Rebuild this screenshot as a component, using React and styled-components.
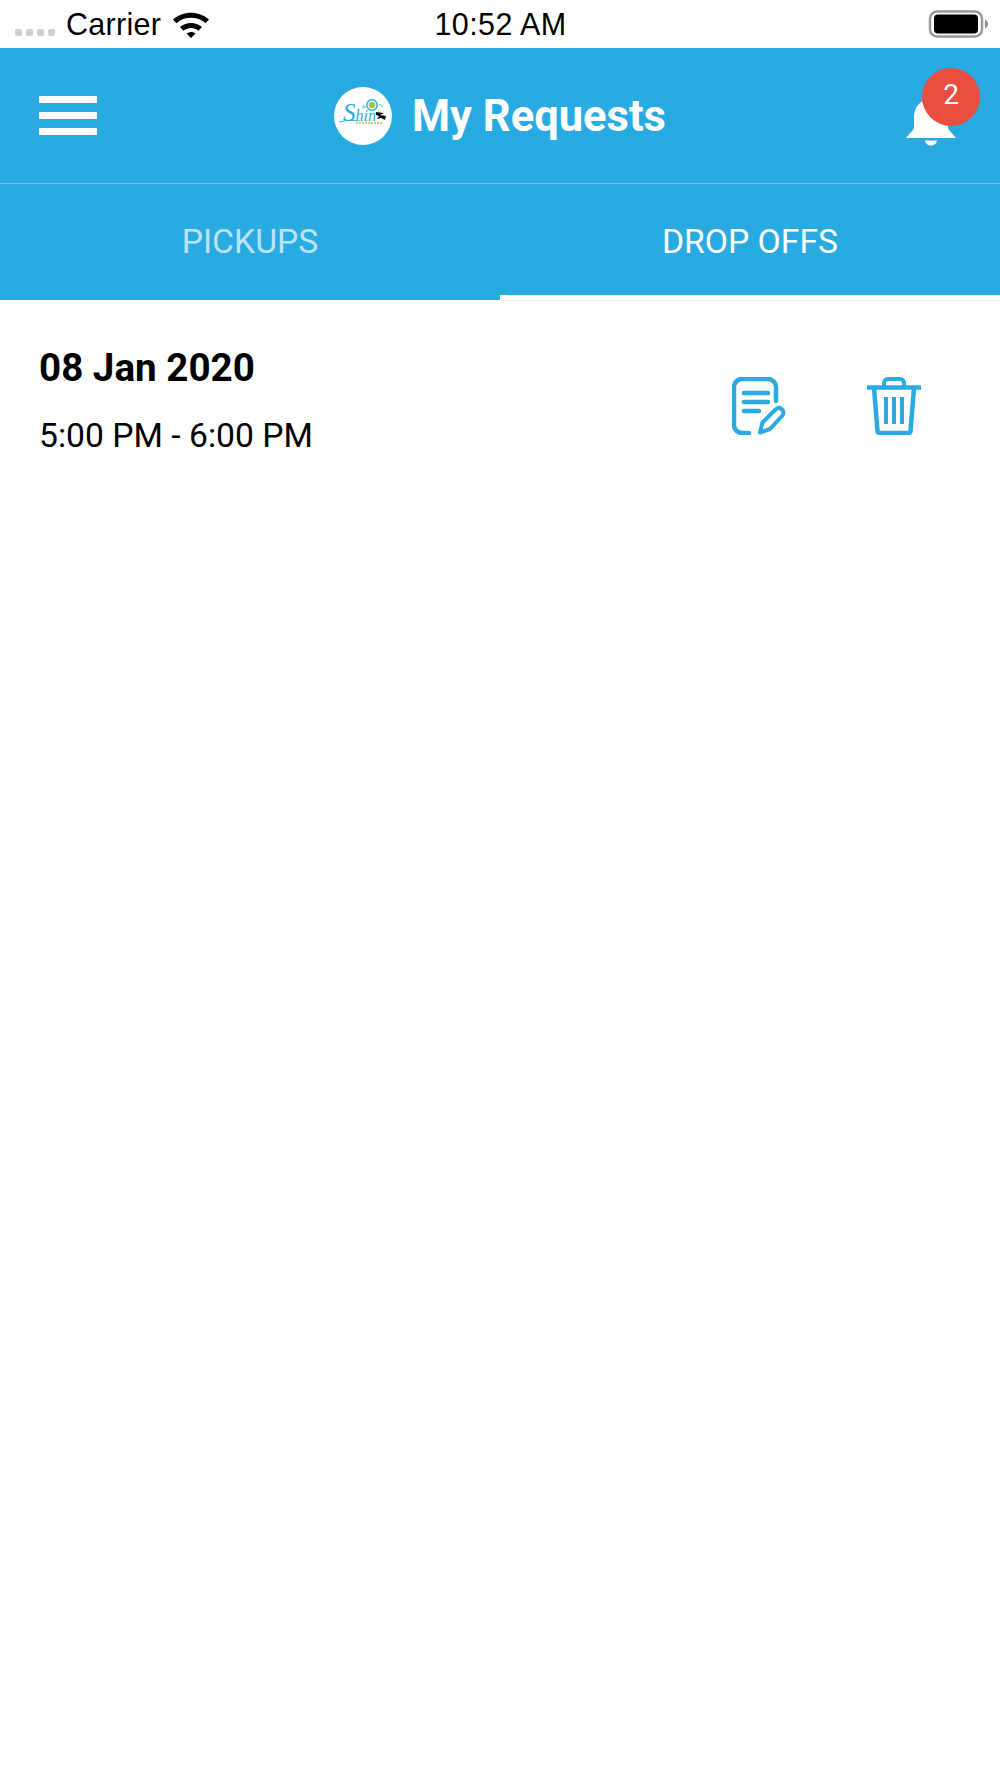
import React from 'react';
import styled, { createGlobalStyle } from 'styled-components';

const brand = '#29abe2';

const GlobalStyle = createGlobalStyle`
  html, body { margin: 0; padding: 0; background: #fff; }
  body { font-family: Roboto, "Liberation Sans", sans-serif; }
`;

const Page = styled.div`
  width: 1000px;
  height: 1778px;
  background: #fff;
  overflow: hidden;
`;

const StatusBar = styled.div`
  height: 48px;
  display: grid;
  grid-template-columns: 1fr auto 1fr;
  align-items: center;
  padding: 0 12px 0 15px;
  box-sizing: border-box;
  font-family: "Liberation Sans", sans-serif;
  font-size: 30.5px;
  color: #000;
`;

const StatusLeft = styled.div`
  display: flex;
  align-items: center;
`;

const Signal = styled.div`
  display: flex;
  gap: 4px;
  margin: 17px 11px 0 0;
`;

const SignalDot = styled.span`
  width: 7px;
  height: 7px;
  border-radius: 2px;
  background: #cfcfcf;
`;

const Carrier = styled.span`
  margin-right: 11px;
  letter-spacing: 0.3px;
`;

const Clock = styled.span`
  letter-spacing: 0.4px;
  margin-left: -2px;
`;

const StatusRight = styled.div`
  display: flex;
  justify-content: flex-end;
`;

const Header = styled.header`
  height: 135px;
  background: ${brand};
  border-bottom: 1px solid #6fbfe0;
  display: grid;
  grid-template-columns: 1fr auto 1fr;
  align-items: center;
  padding: 0 39px;
`;

const MenuButton = styled.div`
  width: 58px;
  display: flex;
  flex-direction: column;
  gap: 9px;
`;

const MenuBar = styled.span`
  height: 7px;
  background: #fff;
`;

const TitleGroup = styled.div`
  display: flex;
  align-items: center;
  gap: 20px;
`;

const LogoDisc = styled.div`
  width: 58px;
  height: 58px;
  border-radius: 50%;
  background: #fff;
  overflow: hidden;
`;

const Title = styled.h1`
  margin: 2px 0 0;
  font-size: 43.5px;
  line-height: 56px;
  font-weight: 700;
  color: #fff;
  white-space: nowrap;
`;

const BellArea = styled.div`
  justify-self: end;
  position: relative;
  width: 58px;
  height: 95px;
  margin-right: -19px;
`;

const BellIcon = styled.svg`
  position: absolute;
  left: -18px;
  top: 28px;
`;

const Badge = styled.span`
  position: absolute;
  left: 0;
  top: 0;
  width: 58px;
  height: 58px;
  border-radius: 50%;
  background: #e94e3e;
  color: #fff;
  font-size: 28px;
  line-height: 53px;
  text-align: center;
`;

const Tabs = styled.nav`
  height: 116px;
  background: ${brand};
  display: grid;
  grid-template-columns: 1fr 1fr;
`;

const Tab = styled.div`
  display: flex;
  align-items: center;
  justify-content: center;
  padding-top: 4px;
  box-sizing: border-box;
  font-size: 33.7px;
  color: ${(p) => (p.$active ? '#fff' : 'rgba(255, 255, 255, 0.7)')};
  border-bottom: 5px solid ${(p) => (p.$active ? '#fff' : 'transparent')};
  box-shadow: ${(p) => (p.$active ? '0 1px 0 #f0f0f0' : 'none')};
`;

const RequestRow = styled.section`
  display: flex;
  justify-content: space-between;
  align-items: flex-start;
  padding: 45px 79px 0 39px;
`;

const RequestDate = styled.div`
  font-size: 38.6px;
  line-height: 46px;
  font-weight: 700;
  color: #000;
`;

const RequestTime = styled.div`
  font-size: 33.7px;
  line-height: 40px;
  margin-top: 25px;
  color: #000;
`;

const Actions = styled.div`
  display: flex;
  gap: 79px;
  margin-top: 32px;
`;

const SignalIcon = () => (
  <svg width="38" height="28" viewBox="0 0 38 28">
    <path d="M1 9.5C11 .5 27 .5 37 9.5l-3.4 3.8C25.5 6 12.5 6 4.400 13.300z" fill="#000" />
    <path d="M8 17c6.5-5.500 15.500-5.500 22 0l-3.500 3.800c-4.500-3.600-10.500-3.600-15 0z" fill="#000" />
    <path d="M14.500 23.500c2.800-2 6.200-2 9 0L19 28z" fill="#000" />
  </svg>
);

const BatteryIcon = () => (
  <svg width="60" height="28" viewBox="0 0 60 28">
    <rect x="2" y="1.5" width="52" height="25" rx="7" fill="none" stroke="#999" strokeWidth="2.5" />
    <rect x="6" y="4.5" width="44" height="19" rx="4" fill="#000" />
    <path d="M57 9.5c2 .5 3 2.500 3 4.500s-1 4-3 4.500z" fill="#8e8e8e" />
  </svg>
);

const ShineLogo = () => (
  <svg width="58" height="58" viewBox="0 0 58 58">
    <circle cx="38" cy="18" r="5.2" fill="none" stroke="#29abe2" strokeWidth="1.4" />
    <circle cx="38" cy="18" r="3.2" fill="#9ccb3b" />
    <circle cx="30" cy="20" r="1.2" fill="none" stroke="#29abe2" strokeWidth="0.7" />
    <path d="M45 18c2-1 3 0 3 2" fill="none" stroke="#29abe2" strokeWidth="0.8" />
    <text x="9" y="34" fontFamily="Liberation Serif, serif" fontStyle="italic" fill="#29abe2">
      <tspan fontSize="25">S</tspan>
      <tspan fontSize="16">hin</tspan>
    </text>
    <path d="M5 35c8-2 14-2 21-1" fill="none" stroke="#29abe2" strokeWidth="0.9" />
    <path d="M42 25l8 1-4 2 6 1-1 4-4-2-4 1 2-3-3-1z" fill="#111" />
    <path d="M22 36h27" stroke="#9ccb3b" strokeWidth="1.5" strokeDasharray="2 1" />
  </svg>
);

const Bell = () => (
  <BellIcon width="54" height="52" viewBox="0 0 54 52">
    <path d="M27 3C16 3 10 12 10 21v10c0 3-4 6-8 11h50c-4-5-8-8-8-11V21C44 12 38 3 27 3z" fill="#fff" />
    <path d="M21 44.5h12c-.5 3-3 5-6 5s-5.500-2-6-5z" fill="#fff" />
  </BellIcon>
);

const EditNoteIcon = () => (
  <svg width="56" height="58" viewBox="0 0 56 58" fill="none" stroke={brand} strokeLinecap="round" strokeLinejoin="round">
    <path d="M17 56H10a8 8 0 0 1-8-8V10a8 8 0 0 1 8-8h26a8 8 0 0 1 8 8v14" strokeWidth="4.5" />
    <path d="M12 16h24M12 25h24M12 34h15" strokeWidth="4.5" />
    <path d="M28 55.500l2.500-10L43 33c2.500-2.500 5-2.500 7-.5s2 4.500 0 6.500L38 52z" strokeWidth="4" />
  </svg>
);

const TrashIcon = () => (
  <svg width="54" height="58" viewBox="0 0 54 58" fill="none" stroke={brand} strokeLinejoin="round">
    <path d="M0 10.5h54" strokeWidth="4.5" />
    <path d="M17 10V6a4 4 0 0 1 4-4h12a4 4 0 0 1 4 4v4" strokeWidth="4" />
    <path d="M7 11l3.500 43a2 2 0 0 0 2 2h29a2 2 0 0 0 2-2L47 11" strokeWidth="4.5" />
    <path d="M19 20v27M27 20v27M35 20v27" strokeWidth="4" />
  </svg>
);

export default function App() {
  return (
    <Page>
      <GlobalStyle />
      <StatusBar>
        <StatusLeft>
          <Signal>
            <SignalDot />
            <SignalDot />
            <SignalDot />
            <SignalDot />
          </Signal>
          <Carrier>Carrier</Carrier>
          <SignalIcon />
        </StatusLeft>
        <Clock>10:52 AM</Clock>
        <StatusRight>
          <BatteryIcon />
        </StatusRight>
      </StatusBar>

      <Header>
        <MenuButton>
          <MenuBar />
          <MenuBar />
          <MenuBar />
        </MenuButton>
        <TitleGroup>
          <LogoDisc>
            <ShineLogo />
          </LogoDisc>
          <Title>My Requests</Title>
        </TitleGroup>
        <BellArea>
          <Bell />
          <Badge>2</Badge>
        </BellArea>
      </Header>

      <Tabs>
        <Tab>PICKUPS</Tab>
        <Tab $active>DROP OFFS</Tab>
      </Tabs>

      <RequestRow>
        <div>
          <RequestDate>08 Jan 2020</RequestDate>
          <RequestTime>5:00 PM - 6:00 PM</RequestTime>
        </div>
        <Actions>
          <EditNoteIcon />
          <TrashIcon />
        </Actions>
      </RequestRow>
    </Page>
  );
}
